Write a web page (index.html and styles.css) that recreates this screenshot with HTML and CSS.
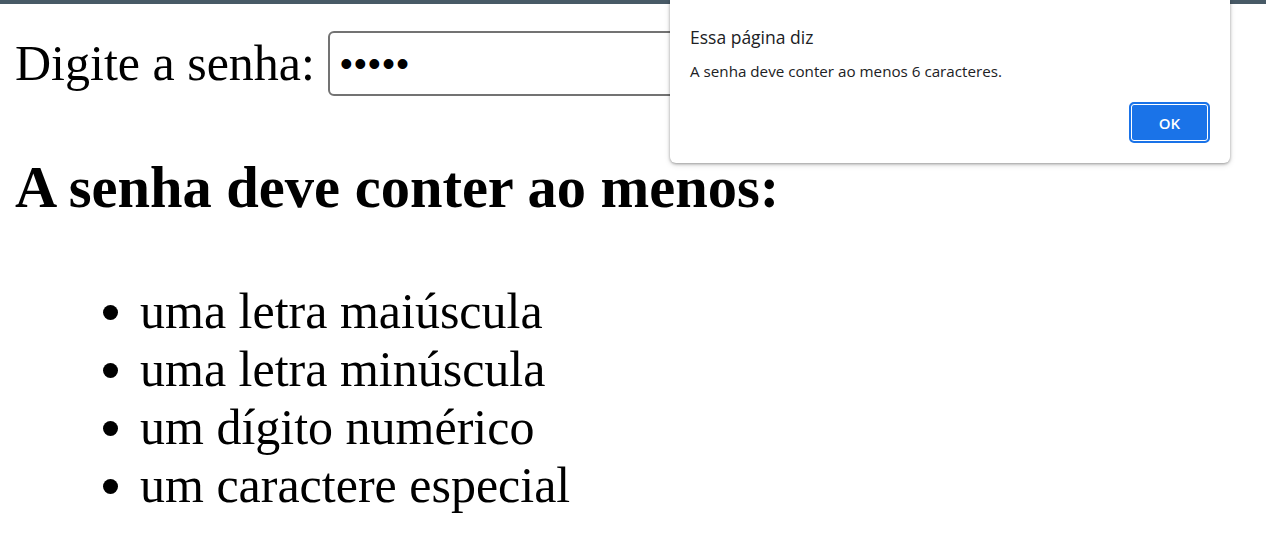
FILE: index.html
```html
<!DOCTYPE html>
<html lang="pt-BR">
<head>
<meta charset="utf-8">
<title>Senha</title>
<link rel="stylesheet" href="styles.css">
</head>
<body>
<div class="topbar"></div>
<main class="page">
  <div class="row">
    <label class="label" for="pw">Digite a senha:</label>
    <input class="pw" id="pw" type="password" value="12345">
  </div>
  <h3 class="title">A senha deve conter ao menos:</h3>
  <ul class="rules">
    <li>uma letra maiúscula</li>
    <li>uma letra minúscula</li>
    <li>um dígito numérico</li>
    <li>um caractere especial</li>
  </ul>
</main>
<div class="dialog" role="alertdialog">
  <div class="dlg-title">Essa página diz</div>
  <div class="dlg-msg">A senha deve conter ao menos 6 caracteres.</div>
  <div class="dlg-actions">
    <button class="dlg-ok">OK</button>
  </div>
</div>
</body>
</html>
```
FILE: styles.css
```css
html, body {
  margin: 0;
  padding: 0;
  background: #ffffff;
}
body {
  font-family: "Liberation Serif", "Times New Roman", serif;
  color: #000;
  overflow: hidden;
}
.topbar {
  height: 4px;
  background: #485a66;
}
.page {
  padding: 27px 14px 0 14px;
}
.row {
  display: flex;
  align-items: center;
  gap: 13px;
  font-size: 50px;
}
.label {
  line-height: 57px;
  padding-left: 1px;
}
.pw {
  box-sizing: border-box;
  width: 420px;
  height: 65px;
  border: 2px solid #737373;
  border-radius: 6px;
  padding: 0 10px;
  font-family: "Liberation Sans", Arial, sans-serif;
  font-size: 36px;
  color: #000;
  background: #fff;
  outline: none;
  letter-spacing: 1.5px;
}
.title {
  font-size: 58.5px;
  font-weight: bold;
  margin: 58px 0 0 1px;
}
.rules {
  font-size: 50px;
  margin: 61px 0 0 0;
  padding-left: 126px;
}
.rules li {
  line-height: 58px;
}
.dialog {
  position: absolute;
  left: 670px;
  top: 0;
  width: 560px;
  height: 163px;
  box-sizing: border-box;
  background: #fff;
  border-radius: 0 0 6px 6px;
  box-shadow: 0 1px 3px rgba(0,0,0,0.35), 0 2px 6px rgba(0,0,0,0.12);
  font-family: "Open Sans", "Noto Sans", sans-serif;
  color: #202124;
  padding: 25px 20px 0 20px;
  display: flex;
  flex-direction: column;
}
.dlg-title {
  font-size: 17.5px;
  line-height: 24px;
}
.dlg-msg {
  font-size: 15.2px;
  line-height: 20px;
  margin-top: 12px;
}
.dlg-actions {
  display: flex;
  justify-content: flex-end;
  margin-top: 21px;
}
.dlg-ok {
  box-sizing: border-box;
  width: 81px;
  height: 41px;
  background: #1a73e8;
  color: #fff;
  font-family: "Open Sans", "Noto Sans", sans-serif;
  font-weight: 600;
  font-size: 15px;
  border: 2px solid #1a73e8;
  border-radius: 5px;
  box-shadow: inset 0 0 0 1px #ffffff;
  cursor: pointer;
}
```
